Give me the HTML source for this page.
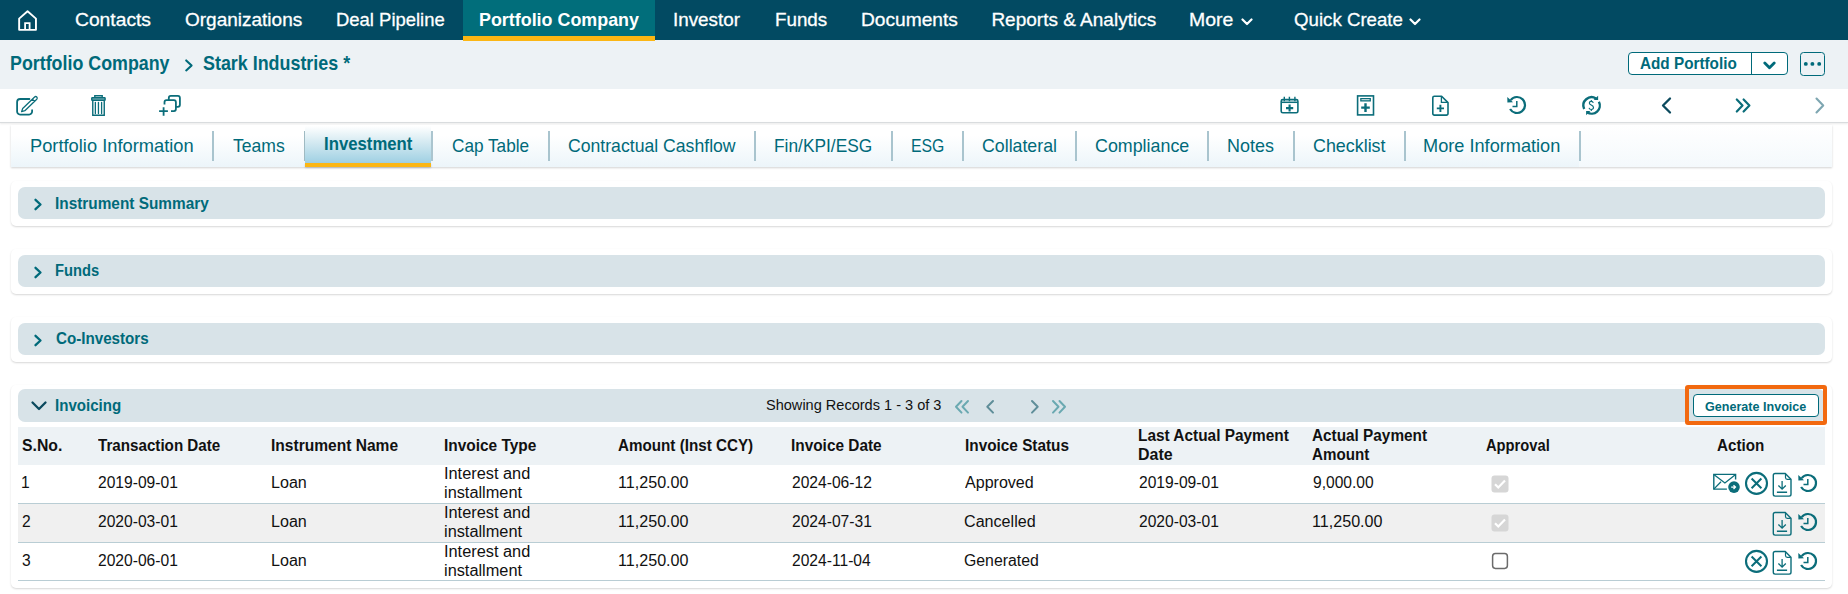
<!DOCTYPE html>
<html><head><meta charset="utf-8"><style>
html,body{margin:0;padding:0;}
body{width:1848px;height:594px;overflow:hidden;position:relative;background:#fff;font-family:"Liberation Sans", sans-serif;}
.t{position:absolute;line-height:0;white-space:nowrap;transform-origin:0 0;}
.b{position:absolute;}
</style></head><body>
<div class="b" style="left:0px;top:0px;width:1848px;height:40px;background:#024a62"></div>
<div class="b" style="left:463px;top:0px;width:192px;height:40px;background:#016e7b"></div>
<div class="b" style="left:463px;top:36px;width:192px;height:5px;background:#fbb614;z-index:2"></div>
<svg class="b" style="left:14px;top:6px" width="28" height="28" viewBox="14 6 28 28"><path d="M19.15 18.6 L27.55 11.2 L35.95 18.6 V29.85 H19.15 Z" fill="none" stroke="#fff" stroke-width="1.9" stroke-linejoin="round"/><path d="M25.1 29.85 V23.1 H29.6 V29.85" fill="none" stroke="#fff" stroke-width="1.8"/></svg>
<div class="t" style="left:75.19px;top:19.82px;font-size:19px;font-weight:400;color:#fff;transform:scaleX(1.0135);-webkit-text-stroke:0.3px #fff;">Contacts</div>
<div class="t" style="left:185.00px;top:19.82px;font-size:19px;font-weight:400;color:#fff;-webkit-text-stroke:0.3px #fff;">Organizations</div>
<div class="t" style="left:336.33px;top:19.82px;font-size:19px;font-weight:400;color:#fff;transform:scaleX(0.9712);-webkit-text-stroke:0.3px #fff;">Deal Pipeline</div>
<div class="t" style="left:673.21px;top:19.82px;font-size:19px;font-weight:400;color:#fff;transform:scaleX(0.9910);-webkit-text-stroke:0.3px #fff;">Investor</div>
<div class="t" style="left:774.91px;top:19.82px;font-size:19px;font-weight:400;color:#fff;transform:scaleX(0.9882);-webkit-text-stroke:0.3px #fff;">Funds</div>
<div class="t" style="left:860.59px;top:19.82px;font-size:19px;font-weight:400;color:#fff;transform:scaleX(1.0084);-webkit-text-stroke:0.3px #fff;">Documents</div>
<div class="t" style="left:991.40px;top:19.82px;font-size:19px;font-weight:400;color:#fff;-webkit-text-stroke:0.3px #fff;">Reports &amp; Analytics</div>
<div class="t" style="left:1189.38px;top:19.82px;font-size:19px;font-weight:400;color:#fff;transform:scaleX(1.0238);-webkit-text-stroke:0.3px #fff;">More</div>
<div class="t" style="left:1293.92px;top:19.82px;font-size:19px;font-weight:400;color:#fff;transform:scaleX(0.9826);-webkit-text-stroke:0.3px #fff;">Quick Create</div>
<div class="t" style="left:478.66px;top:19.82px;font-size:19px;font-weight:700;color:#fff;transform:scaleX(0.9414);">Portfolio Company</div>
<svg class="b" style="left:1240.5px;top:17.8px;" width="12" height="8" viewBox="0 0 12 8"><path d="M1.5 1.5 L6 6 L10.5 1.5" fill="none" stroke="#fff" stroke-width="2.2" stroke-linecap="round" stroke-linejoin="round"/></svg>
<svg class="b" style="left:1409px;top:17.8px;" width="12" height="8" viewBox="0 0 12 8"><path d="M1.5 1.5 L6 6 L10.5 1.5" fill="none" stroke="#fff" stroke-width="2.2" stroke-linecap="round" stroke-linejoin="round"/></svg>
<div class="b" style="left:0px;top:40px;width:1848px;height:49px;background:#edf2f5"></div>
<div class="t" style="left:10.40px;top:63.34px;font-size:19.8px;font-weight:700;color:#006a7a;transform:scaleX(0.9017);">Portfolio Company</div>
<svg class="b" style="left:180px;top:55px" width="16" height="20" viewBox="180 55 16 20"><path d="M186.2 60.4 L191.6 65.4 L186.2 70.4" fill="none" stroke="#006a7a" stroke-width="2.1" stroke-linecap="round" stroke-linejoin="round"/></svg>
<div class="t" style="left:202.60px;top:63.34px;font-size:19.8px;font-weight:700;color:#006a7a;transform:scaleX(0.9043);">Stark Industries *</div>
<div class="b" style="left:1628px;top:52px;width:160px;height:23px;border:1.3px solid #006a7a;border-radius:4px;box-sizing:border-box;background:#fff"></div>
<div class="b" style="left:1751px;top:52px;width:1px;height:23px;background:#006a7a"></div>
<div class="t" style="left:1639.80px;top:64.11px;font-size:17px;font-weight:700;color:#006a7a;transform:scaleX(0.8991);">Add Portfolio</div>
<svg class="b" style="left:1763px;top:60.8px;" width="13" height="10" viewBox="0 0 13 10"><path d="M1.8 2 L6.5 6.8 L11.2 2" fill="none" stroke="#006a7a" stroke-width="2.8" stroke-linecap="round" stroke-linejoin="round"/></svg>
<div class="b" style="left:1800px;top:52px;width:25px;height:24px;border:1.3px solid #006a7a;border-radius:3.5px;box-sizing:border-box"></div>
<svg class="b" style="left:1800px;top:52px;" width="25" height="24" viewBox="0 0 25 24"><circle cx="5.8" cy="11.9" r="1.95" fill="#006a7a"/><circle cx="12.4" cy="11.9" r="1.95" fill="#006a7a"/><circle cx="19.2" cy="11.9" r="1.95" fill="#006a7a"/></svg>
<div class="b" style="left:0px;top:89px;width:1848px;height:33px;background:#fff"></div>
<div class="b" style="left:0px;top:122px;width:1848px;height:1px;background:#d9dcde;box-shadow:0 1px 2px rgba(0,0,0,0.12)"></div>
<svg class="b" style="left:12px;top:90px" width="30" height="30" viewBox="12 90 30 30"><path d="M29.4 99 H20.1 a3 3 0 0 0 -3 3 V111.6 a3 3 0 0 0 3 3 H29.1 a3 3 0 0 0 3 -3 V110.2" fill="none" stroke="#0b6d7a" stroke-width="1.8" stroke-linecap="round"/><path d="M21.6 111.7 L22.68 108.49 L34.62 96.98 A1.55 1.55 0 0 1 36.78 99.2 L24.84 110.71 Z M32.38 99.12 L34.54 101.34" fill="none" stroke="#0b6d7a" stroke-width="1.25" stroke-linejoin="round"/></svg>
<svg class="b" style="left:88px;top:92px" width="20" height="26" viewBox="88 92 20 26"><path d="M94.8 97.2 V95.75 H102.2 V97.2" fill="none" stroke="#0b6d7a" stroke-width="1.4"/><rect x="91.76" y="97.77" width="13.34" height="2.5" rx="0.5" fill="#0b6d7a" fill-opacity="0.5" stroke="#0b6d7a" stroke-width="1.4"/><path d="M92.77 100.9 V115.3 H104.25 V100.9" fill="none" stroke="#0b6d7a" stroke-width="1.4"/><path d="M95.35 102.3 V113.6 M98.45 102.3 V113.6 M101.6 102.3 V113.6" stroke="#0b6d7a" stroke-width="1.3" stroke-linecap="round"/></svg>
<svg class="b" style="left:156px;top:92px" width="28" height="26" viewBox="156 92 28 26"><path d="M168.8 100.2 V97.95 a2 2 0 0 1 2 -2 H177.9 a2 2 0 0 1 2 2 V104.8 a2 2 0 0 1 -2 2 H175.9" fill="none" stroke="#0b6d7a" stroke-width="1.8"/><path d="M164.5 104.6 V102.2 a2 2 0 0 1 2 -2 H173.9 a2 2 0 0 1 2 2 V109.1 a2 2 0 0 1 -2 2 H171" fill="none" stroke="#0b6d7a" stroke-width="1.8"/><path d="M163.6 107.2 V115.8 M159.1 111.2 H167.9" stroke="#0b6d7a" stroke-width="1.8"/></svg>
<svg class="b" style="left:1276px;top:92px" width="26" height="26" viewBox="1276 92 26 26"><rect x="1281.2" y="99.6" width="16.7" height="13.2" rx="1.6" fill="none" stroke="#0b6d7a" stroke-width="1.6"/><path d="M1281.2 102.3 H1297.9" stroke="#0b6d7a" stroke-width="1.5"/><path d="M1284.3 96.8 V101.2 M1289.4 96.8 V101.2 M1294.9 96.8 V101.2" stroke="#0b6d7a" stroke-width="1.4"/><path d="M1289.6 104.6 V111.6 M1286.0 108.1 H1293.2" stroke="#0b6d7a" stroke-width="2.1"/></svg>
<svg class="b" style="left:1353px;top:92px" width="26" height="26" viewBox="1353 92 26 26"><rect x="1357.6" y="95.9" width="15.9" height="19" fill="none" stroke="#0b6d7a" stroke-width="1.6"/><rect x="1360.85" y="98.65" width="9.4" height="2.2" fill="none" stroke="#0b6d7a" stroke-width="1.3"/><path d="M1365.5 103.3 V111.9 M1361.2 107.6 H1369.8" stroke="#0b6d7a" stroke-width="2.4"/></svg>
<svg class="b" style="left:1428px;top:92px" width="26" height="26" viewBox="1428 92 26 26"><path d="M1434.3 96.2 H1441.6 L1448 102.6 V113.6 a1.5 1.5 0 0 1 -1.5 1.5 H1434.3 a1.5 1.5 0 0 1 -1.5 -1.5 V97.7 a1.5 1.5 0 0 1 1.5 -1.5 Z" fill="none" stroke="#0b6d7a" stroke-width="1.6" stroke-linejoin="round"/><path d="M1441.4 96.4 V102.3 H1447.8" fill="none" stroke="#0b6d7a" stroke-width="1.3"/><path d="M1440.4 104.8 V112.0 M1436.8 108.4 H1444.0" stroke="#0b6d7a" stroke-width="1.9"/></svg>
<svg class="b" style="left:1504.8px;top:93.35px;" width="24" height="24" viewBox="0 0 24 24"><path d="M5.70 7.07 A8.0 8.0 0 1 1 5.07 16.00" fill="none" stroke="#0b6d7a" stroke-width="2.2"/><path d="M2.3 3.9 L2.4 9.5 L8.0 9.2 Z" fill="#0b6d7a"/><path d="M11.8 8.0 V13.6 H7.5" fill="none" stroke="#0b6d7a" stroke-width="1.5"/></svg>
<svg class="b" style="left:1578px;top:92px;" width="28" height="26" viewBox="0 0 28 26"><path d="M6.17 16.92 A8.2 8.2 0 0 1 18.07 6.57" fill="none" stroke="#0b6d7a" stroke-width="2.4"/><path d="M20.91 9.73 A8.2 8.2 0 0 1 9.13 20.33" fill="none" stroke="#0b6d7a" stroke-width="2.4"/><path d="M20.1 3.7 L20.1 8.0 L15.6 8.0 Z" fill="#0b6d7a"/><path d="M8.1 18.9 L8.1 23.2 L12.4 18.9 Z" fill="#0b6d7a"/><path d="M15.3 10.9 C15.0 9.9 14.2 9.3 13.3 9.3 C12.1 9.3 11.3 10.0 11.3 11.0 C11.3 13.4 15.5 12.6 15.5 15.6 C15.5 16.7 14.5 17.5 13.3 17.5 C12.2 17.5 11.3 16.9 11.0 15.9 M13.3 8.0 V9.3 M13.3 17.5 V18.9" fill="none" stroke="#0b6d7a" stroke-width="1.15"/></svg>
<svg class="b" style="left:1659px;top:96px;" width="15" height="19" viewBox="0 0 15 19"><path d="M11 2.5 L4 9.5 L11 16.5" fill="none" stroke="#0c4a5e" stroke-width="2.3" stroke-linecap="round" stroke-linejoin="round"/></svg>
<svg class="b" style="left:1734px;top:96px;" width="19" height="19" viewBox="0 0 19 19"><path d="M2.8 3.5 L8.5 9.5 L2.8 15.5 M9.6 3.5 L15.4 9.5 L9.6 15.5" fill="none" stroke="#0b6d7a" stroke-width="2.2" stroke-linecap="round" stroke-linejoin="round"/></svg>
<svg class="b" style="left:1813px;top:96px;" width="14" height="19" viewBox="0 0 14 19"><path d="M3.5 2.5 L10.2 9.5 L3.5 16.5" fill="none" stroke="#7ea6b1" stroke-width="2.1" stroke-linecap="round" stroke-linejoin="round"/></svg>
<div class="b" style="left:11px;top:125px;width:1821px;height:42px;background:linear-gradient(#ffffff,#f4f9fc);box-shadow:0 1px 2px rgba(0,0,0,0.18)"></div>
<div class="b" style="left:11px;top:125px;width:1568px;height:42px;background:linear-gradient(#ffffff 25%,#ecf5fa)"></div>
<div class="b" style="left:211.5px;top:131px;width:2px;height:30px;background:#a9c4ce"></div>
<div class="b" style="left:547.5px;top:131px;width:2px;height:30px;background:#a9c4ce"></div>
<div class="b" style="left:753.5px;top:131px;width:2px;height:30px;background:#a9c4ce"></div>
<div class="b" style="left:890.5px;top:131px;width:2px;height:30px;background:#a9c4ce"></div>
<div class="b" style="left:961.5px;top:131px;width:2px;height:30px;background:#a9c4ce"></div>
<div class="b" style="left:1074.5px;top:131px;width:2px;height:30px;background:#a9c4ce"></div>
<div class="b" style="left:1206.5px;top:131px;width:2px;height:30px;background:#a9c4ce"></div>
<div class="b" style="left:1292.5px;top:131px;width:2px;height:30px;background:#a9c4ce"></div>
<div class="b" style="left:1403.5px;top:131px;width:2px;height:30px;background:#a9c4ce"></div>
<div class="b" style="left:1578.5px;top:131px;width:2px;height:30px;background:#a9c4ce"></div>
<div class="b" style="left:305px;top:126px;width:126px;height:37px;background:linear-gradient(#ffffff 0%,#d3e9f1 45%,#9fd0e3 100%)"></div>
<div class="b" style="left:304px;top:131px;width:1px;height:30px;background:#9fbac2"></div>
<div class="b" style="left:431px;top:131px;width:2px;height:30px;background:#abc5cf"></div>
<div class="b" style="left:305px;top:163px;width:126px;height:4px;background:#fbb614;box-shadow:0 1px 2px rgba(0,0,0,0.2)"></div>
<div class="t" style="left:29.51px;top:145.59px;font-size:18.5px;font-weight:400;color:#006a7a;transform:scaleX(0.9884);">Portfolio Information</div>
<div class="t" style="left:233.10px;top:145.59px;font-size:18.5px;font-weight:400;color:#006a7a;transform:scaleX(0.9500);">Teams</div>
<div class="t" style="left:451.77px;top:145.59px;font-size:18.5px;font-weight:400;color:#006a7a;transform:scaleX(0.9293);">Cap Table</div>
<div class="t" style="left:567.65px;top:145.59px;font-size:18.5px;font-weight:400;color:#006a7a;transform:scaleX(0.9531);">Contractual Cashflow</div>
<div class="t" style="left:774.36px;top:145.59px;font-size:18.5px;font-weight:400;color:#006a7a;transform:scaleX(0.9369);">Fin/KPI/ESG</div>
<div class="t" style="left:910.85px;top:145.59px;font-size:18.5px;font-weight:400;color:#006a7a;transform:scaleX(0.8541);">ESG</div>
<div class="t" style="left:981.94px;top:145.59px;font-size:18.5px;font-weight:400;color:#006a7a;transform:scaleX(0.9592);">Collateral</div>
<div class="t" style="left:1094.74px;top:145.59px;font-size:18.5px;font-weight:400;color:#006a7a;transform:scaleX(0.9646);">Compliance</div>
<div class="t" style="left:1227.13px;top:145.59px;font-size:18.5px;font-weight:400;color:#006a7a;transform:scaleX(0.9702);">Notes</div>
<div class="t" style="left:1312.53px;top:145.59px;font-size:18.5px;font-weight:400;color:#006a7a;transform:scaleX(0.9662);">Checklist</div>
<div class="t" style="left:1423.02px;top:145.59px;font-size:18.5px;font-weight:400;color:#006a7a;transform:scaleX(0.9819);">More Information</div>
<div class="t" style="left:323.79px;top:143.59px;font-size:18.5px;font-weight:700;color:#006a7a;transform:scaleX(0.9052);">Investment</div>
<div class="b" style="left:11px;top:181px;width:1821px;height:45px;background:#fff;border-radius:5px;box-shadow:0 1px 2px rgba(0,0,0,0.16)"></div>
<div class="b" style="left:18px;top:187px;width:1807px;height:32px;background:#d8e3e8;border-radius:7px"></div>
<svg class="b" style="left:32.7px;top:197.9px;" width="11" height="13" viewBox="0 0 11 13"><path d="M2.5 1.8 L7.5 6.5 L2.5 11.2" fill="none" stroke="#006a7a" stroke-width="2.3" stroke-linecap="round" stroke-linejoin="round"/></svg>
<div class="t" style="left:54.94px;top:204.36px;font-size:16px;font-weight:700;color:#006a7a;transform:scaleX(0.9604);">Instrument Summary</div>
<div class="b" style="left:11px;top:249px;width:1821px;height:45px;background:#fff;border-radius:5px;box-shadow:0 1px 2px rgba(0,0,0,0.16)"></div>
<div class="b" style="left:18px;top:255px;width:1807px;height:32px;background:#d8e3e8;border-radius:7px"></div>
<svg class="b" style="left:32.7px;top:265.9px;" width="11" height="13" viewBox="0 0 11 13"><path d="M2.5 1.8 L7.5 6.5 L2.5 11.2" fill="none" stroke="#006a7a" stroke-width="2.3" stroke-linecap="round" stroke-linejoin="round"/></svg>
<div class="t" style="left:54.98px;top:271.46px;font-size:16px;font-weight:700;color:#006a7a;transform:scaleX(0.9191);">Funds</div>
<div class="b" style="left:11px;top:317px;width:1821px;height:45px;background:#fff;border-radius:5px;box-shadow:0 1px 2px rgba(0,0,0,0.16)"></div>
<div class="b" style="left:18px;top:323px;width:1807px;height:32px;background:#d8e3e8;border-radius:7px"></div>
<svg class="b" style="left:32.7px;top:333.9px;" width="11" height="13" viewBox="0 0 11 13"><path d="M2.5 1.8 L7.5 6.5 L2.5 11.2" fill="none" stroke="#006a7a" stroke-width="2.3" stroke-linecap="round" stroke-linejoin="round"/></svg>
<div class="t" style="left:55.90px;top:339.36px;font-size:16px;font-weight:700;color:#006a7a;transform:scaleX(0.9480);">Co-Investors</div>
<div class="b" style="left:11px;top:385px;width:1821px;height:203px;background:#fff;border-radius:5px;box-shadow:0 1px 2px rgba(0,0,0,0.16)"></div>
<div class="b" style="left:18px;top:389px;width:1807px;height:32.5px;background:#d8e3e8;border-radius:7px"></div>
<svg class="b" style="left:29.5px;top:399.8px;" width="18" height="13" viewBox="0 0 18 13"><path d="M2.5 2.5 L9 9 L15.5 2.5" fill="none" stroke="#0c4a5e" stroke-width="2.3" stroke-linecap="round" stroke-linejoin="round"/></svg>
<div class="t" style="left:55.26px;top:406.46px;font-size:16px;font-weight:700;color:#006a7a;transform:scaleX(0.9420);">Invoicing</div>
<div class="t" style="left:766.30px;top:404.98px;font-size:14.5px;font-weight:400;color:#111;transform:scaleX(1.0029);">Showing Records 1 - 3 of 3</div>
<svg class="b" style="left:953px;top:399px;" width="19" height="16" viewBox="0 0 19 16"><path d="M8.5 2 L3 7.8 L8.5 13.6 M15 2 L9.5 7.8 L15 13.6" fill="none" stroke="#6aa9b1" stroke-width="2" stroke-linecap="round" stroke-linejoin="round"/></svg>
<svg class="b" style="left:984px;top:399px;" width="12" height="16" viewBox="0 0 12 16"><path d="M9 2 L3.3 7.8 L9 13.6" fill="none" stroke="#5f8e99" stroke-width="2" stroke-linecap="round" stroke-linejoin="round"/></svg>
<svg class="b" style="left:1029px;top:399px;" width="12" height="16" viewBox="0 0 12 16"><path d="M3 2 L8.7 7.8 L3 13.6" fill="none" stroke="#5f8e99" stroke-width="2" stroke-linecap="round" stroke-linejoin="round"/></svg>
<svg class="b" style="left:1050px;top:399px;" width="19" height="16" viewBox="0 0 19 16"><path d="M3 2 L8.5 7.8 L3 13.6 M9.5 2 L15 7.8 L9.5 13.6" fill="none" stroke="#6aa9b1" stroke-width="2" stroke-linecap="round" stroke-linejoin="round"/></svg>
<div class="b" style="left:1685px;top:385px;width:142px;height:40px;border:4.2px solid #f2690f;border-radius:3px;box-sizing:border-box"></div>
<div class="b" style="left:1693px;top:394px;width:126px;height:23px;border:1.2px solid #006a7a;border-radius:4px;box-sizing:border-box;background:#fff"></div>
<div class="t" style="left:1705.20px;top:406.57px;font-size:12.2px;font-weight:700;color:#006a7a;transform:scaleX(1.0316);">Generate Invoice</div>
<div class="b" style="left:18px;top:427px;width:1807px;height:38px;background:#edf2f5"></div>
<div class="t" style="left:21.60px;top:446.46px;font-size:16px;font-weight:700;color:#111;transform:scaleX(0.9850);">S.No.</div>
<div class="t" style="left:98.40px;top:446.46px;font-size:16px;font-weight:700;color:#111;transform:scaleX(0.9481);">Transaction Date</div>
<div class="t" style="left:270.63px;top:446.46px;font-size:16px;font-weight:700;color:#111;transform:scaleX(0.9721);">Instrument Name</div>
<div class="t" style="left:443.74px;top:446.46px;font-size:16px;font-weight:700;color:#111;transform:scaleX(0.9649);">Invoice Type</div>
<div class="t" style="left:618.30px;top:446.46px;font-size:16px;font-weight:700;color:#111;transform:scaleX(0.9500);">Amount (Inst CCY)</div>
<div class="t" style="left:790.94px;top:446.46px;font-size:16px;font-weight:700;color:#111;transform:scaleX(0.9613);">Invoice Date</div>
<div class="t" style="left:964.74px;top:446.46px;font-size:16px;font-weight:700;color:#111;transform:scaleX(0.9589);">Invoice Status</div>
<div class="t" style="left:1137.84px;top:436.26px;font-size:16px;font-weight:700;color:#111;transform:scaleX(0.9622);">Last Actual Payment</div>
<div class="t" style="left:1137.90px;top:455.36px;font-size:16px;font-weight:700;color:#111;transform:scaleX(0.9970);">Date</div>
<div class="t" style="left:1312.20px;top:436.26px;font-size:16px;font-weight:700;color:#111;transform:scaleX(0.9583);">Actual Payment</div>
<div class="t" style="left:1312.20px;top:455.36px;font-size:16px;font-weight:700;color:#111;transform:scaleX(0.9467);">Amount</div>
<div class="t" style="left:1486.10px;top:445.96px;font-size:16px;font-weight:700;color:#111;transform:scaleX(0.9188);">Approval</div>
<div class="t" style="left:1716.70px;top:446.46px;font-size:16px;font-weight:700;color:#111;transform:scaleX(0.9490);">Action</div>
<div class="b" style="left:18px;top:503px;width:1807px;height:1px;background:#b9cdd4"></div>
<div class="t" style="left:20.92px;top:483.36px;font-size:16px;font-weight:400;color:#111;transform:scaleX(0.9756);">1</div>
<div class="t" style="left:98.40px;top:483.36px;font-size:16px;font-weight:400;color:#111;transform:scaleX(0.9756);">2019-09-01</div>
<div class="t" style="left:270.59px;top:483.36px;font-size:16px;font-weight:400;color:#111;transform:scaleX(1.0059);">Loan</div>
<div class="t" style="left:443.88px;top:474.46px;font-size:16px;font-weight:400;color:#111;transform:scaleX(1.0205);">Interest and</div>
<div class="t" style="left:443.88px;top:492.86px;font-size:16px;font-weight:400;color:#111;transform:scaleX(1.0205);">installment</div>
<div class="t" style="left:617.69px;top:483.36px;font-size:16px;font-weight:400;color:#111;transform:scaleX(1.0072);">11,250.00</div>
<div class="t" style="left:791.70px;top:483.36px;font-size:16px;font-weight:400;color:#111;transform:scaleX(0.9756);">2024-06-12</div>
<div class="t" style="left:965.20px;top:483.36px;font-size:16px;font-weight:400;color:#111;transform:scaleX(1.0029);">Approved</div>
<div class="t" style="left:1139.00px;top:483.36px;font-size:16px;font-weight:400;color:#111;transform:scaleX(0.9756);">2019-09-01</div>
<div class="t" style="left:1312.90px;top:483.36px;font-size:16px;font-weight:400;color:#111;transform:scaleX(0.9742);">9,000.00</div>
<svg class="b" style="left:1491px;top:474.5px;" width="18" height="18" viewBox="0 0 18 18"><rect x="0.5" y="0.5" width="17" height="17" rx="3" fill="#d6d6d6"/><path d="M4 9.2 L7.3 12.5 L14 5.5" fill="none" stroke="#fff" stroke-width="2.2"/></svg>
<svg class="b" style="left:1708px;top:468px;" width="62" height="32" viewBox="0 0 62 32"><path d="M18.9 21.1 H5.8 V6.36 H27.6 V11.6" fill="none" stroke="#0b6d7a" stroke-width="1.4"/><path d="M5.8 6.5 L16.9 15 L27.6 6.5 M5.8 21.1 L13 13.8" fill="none" stroke="#0b6d7a" stroke-width="1.3"/><circle cx="26" cy="19.1" r="5.8" fill="#0b6d7a"/><path d="M23.2 19.1 H27.3 M25.5 17.2 L27.5 19.1 L25.5 21" fill="none" stroke="#fff" stroke-width="1.3"/></svg>
<svg class="b" style="left:1708px;top:468px;" width="62" height="32" viewBox="0 0 62 32"><circle cx="48.5" cy="15.35" r="10.5" fill="none" stroke="#0b6d7a" stroke-width="2.1"/><path d="M43.6 10.5 L53.4 20.2 M53.4 10.5 L43.6 20.2" stroke="#0b6d7a" stroke-width="2"/></svg>
<svg class="b" style="left:1768px;top:468px;" width="28" height="32" viewBox="0 0 28 32"><path d="M7.1 5.55 H17.2 L23.0 11.3 V26.3 a1.8 1.8 0 0 1 -1.8 1.8 H7.1 a1.8 1.8 0 0 1 -1.8 -1.8 V7.35 a1.8 1.8 0 0 1 1.8 -1.8 Z" fill="none" stroke="#0b6d7a" stroke-width="1.4"/><path d="M17.5 5.8 V9.5 a1.8 1.8 0 0 0 1.8 1.8 H22.8" fill="none" stroke="#0b6d7a" stroke-width="1.2"/><path d="M14.1 12.9 V21.2 M10.4 17.5 L14.1 21.2 L17.8 17.5 M8.9 24.25 H19.1" fill="none" stroke="#0b6d7a" stroke-width="1.3"/></svg>
<svg class="b" style="left:1795.65px;top:471.3px;" width="24" height="24" viewBox="0 0 24 24"><path d="M5.70 7.07 A8.0 8.0 0 1 1 5.07 16.00" fill="none" stroke="#0b6d7a" stroke-width="2.2"/><path d="M2.3 3.9 L2.4 9.5 L8.0 9.2 Z" fill="#0b6d7a"/><path d="M11.8 8.0 V13.6 H7.5" fill="none" stroke="#0b6d7a" stroke-width="1.5"/></svg>
<div class="b" style="left:18px;top:504px;width:1807px;height:38px;background:#f0f0f0"></div>
<div class="b" style="left:18px;top:542px;width:1807px;height:1px;background:#b9cdd4"></div>
<div class="t" style="left:21.90px;top:522.36px;font-size:16px;font-weight:400;color:#111;transform:scaleX(0.9756);">2</div>
<div class="t" style="left:98.40px;top:522.36px;font-size:16px;font-weight:400;color:#111;transform:scaleX(0.9756);">2020-03-01</div>
<div class="t" style="left:270.59px;top:522.36px;font-size:16px;font-weight:400;color:#111;transform:scaleX(1.0059);">Loan</div>
<div class="t" style="left:443.88px;top:513.46px;font-size:16px;font-weight:400;color:#111;transform:scaleX(1.0205);">Interest and</div>
<div class="t" style="left:443.88px;top:531.86px;font-size:16px;font-weight:400;color:#111;transform:scaleX(1.0205);">installment</div>
<div class="t" style="left:617.69px;top:522.36px;font-size:16px;font-weight:400;color:#111;transform:scaleX(1.0072);">11,250.00</div>
<div class="t" style="left:791.70px;top:522.36px;font-size:16px;font-weight:400;color:#111;transform:scaleX(0.9756);">2024-07-31</div>
<div class="t" style="left:964.19px;top:522.36px;font-size:16px;font-weight:400;color:#111;transform:scaleX(1.0071);">Cancelled</div>
<div class="t" style="left:1139.00px;top:522.36px;font-size:16px;font-weight:400;color:#111;transform:scaleX(0.9756);">2020-03-01</div>
<div class="t" style="left:1311.89px;top:522.36px;font-size:16px;font-weight:400;color:#111;transform:scaleX(1.0072);">11,250.00</div>
<svg class="b" style="left:1491px;top:513.5px;" width="18" height="18" viewBox="0 0 18 18"><rect x="0.5" y="0.5" width="17" height="17" rx="3" fill="#d6d6d6"/><path d="M4 9.2 L7.3 12.5 L14 5.5" fill="none" stroke="#fff" stroke-width="2.2"/></svg>
<svg class="b" style="left:1768px;top:507px;" width="28" height="32" viewBox="0 0 28 32"><path d="M7.1 5.55 H17.2 L23.0 11.3 V26.3 a1.8 1.8 0 0 1 -1.8 1.8 H7.1 a1.8 1.8 0 0 1 -1.8 -1.8 V7.35 a1.8 1.8 0 0 1 1.8 -1.8 Z" fill="none" stroke="#0b6d7a" stroke-width="1.4"/><path d="M17.5 5.8 V9.5 a1.8 1.8 0 0 0 1.8 1.8 H22.8" fill="none" stroke="#0b6d7a" stroke-width="1.2"/><path d="M14.1 12.9 V21.2 M10.4 17.5 L14.1 21.2 L17.8 17.5 M8.9 24.25 H19.1" fill="none" stroke="#0b6d7a" stroke-width="1.3"/></svg>
<svg class="b" style="left:1795.65px;top:510.29999999999995px;" width="24" height="24" viewBox="0 0 24 24"><path d="M5.70 7.07 A8.0 8.0 0 1 1 5.07 16.00" fill="none" stroke="#0b6d7a" stroke-width="2.2"/><path d="M2.3 3.9 L2.4 9.5 L8.0 9.2 Z" fill="#0b6d7a"/><path d="M11.8 8.0 V13.6 H7.5" fill="none" stroke="#0b6d7a" stroke-width="1.5"/></svg>
<div class="b" style="left:18px;top:580px;width:1807px;height:1px;background:#b9cdd4"></div>
<div class="t" style="left:21.90px;top:561.36px;font-size:16px;font-weight:400;color:#111;transform:scaleX(0.9756);">3</div>
<div class="t" style="left:98.40px;top:561.36px;font-size:16px;font-weight:400;color:#111;transform:scaleX(0.9756);">2020-06-01</div>
<div class="t" style="left:270.59px;top:561.36px;font-size:16px;font-weight:400;color:#111;transform:scaleX(1.0059);">Loan</div>
<div class="t" style="left:443.88px;top:552.46px;font-size:16px;font-weight:400;color:#111;transform:scaleX(1.0205);">Interest and</div>
<div class="t" style="left:443.88px;top:570.86px;font-size:16px;font-weight:400;color:#111;transform:scaleX(1.0205);">installment</div>
<div class="t" style="left:617.69px;top:561.36px;font-size:16px;font-weight:400;color:#111;transform:scaleX(1.0072);">11,250.00</div>
<div class="t" style="left:791.70px;top:561.36px;font-size:16px;font-weight:400;color:#111;transform:scaleX(0.9756);">2024-11-04</div>
<div class="t" style="left:964.21px;top:561.36px;font-size:16px;font-weight:400;color:#111;transform:scaleX(0.9892);">Generated</div>
<svg class="b" style="left:1491px;top:552px;" width="18" height="18" viewBox="0 0 18 18"><rect x="1.6" y="1.6" width="14.8" height="14.8" rx="2.8" fill="#fff" stroke="#6b6b6b" stroke-width="1.5"/></svg>
<svg class="b" style="left:1708px;top:546px;" width="62" height="32" viewBox="0 0 62 32"><circle cx="48.5" cy="15.35" r="10.5" fill="none" stroke="#0b6d7a" stroke-width="2.1"/><path d="M43.6 10.5 L53.4 20.2 M53.4 10.5 L43.6 20.2" stroke="#0b6d7a" stroke-width="2"/></svg>
<svg class="b" style="left:1768px;top:546px;" width="28" height="32" viewBox="0 0 28 32"><path d="M7.1 5.55 H17.2 L23.0 11.3 V26.3 a1.8 1.8 0 0 1 -1.8 1.8 H7.1 a1.8 1.8 0 0 1 -1.8 -1.8 V7.35 a1.8 1.8 0 0 1 1.8 -1.8 Z" fill="none" stroke="#0b6d7a" stroke-width="1.4"/><path d="M17.5 5.8 V9.5 a1.8 1.8 0 0 0 1.8 1.8 H22.8" fill="none" stroke="#0b6d7a" stroke-width="1.2"/><path d="M14.1 12.9 V21.2 M10.4 17.5 L14.1 21.2 L17.8 17.5 M8.9 24.25 H19.1" fill="none" stroke="#0b6d7a" stroke-width="1.3"/></svg>
<svg class="b" style="left:1795.65px;top:549.3px;" width="24" height="24" viewBox="0 0 24 24"><path d="M5.70 7.07 A8.0 8.0 0 1 1 5.07 16.00" fill="none" stroke="#0b6d7a" stroke-width="2.2"/><path d="M2.3 3.9 L2.4 9.5 L8.0 9.2 Z" fill="#0b6d7a"/><path d="M11.8 8.0 V13.6 H7.5" fill="none" stroke="#0b6d7a" stroke-width="1.5"/></svg>
</body></html>
